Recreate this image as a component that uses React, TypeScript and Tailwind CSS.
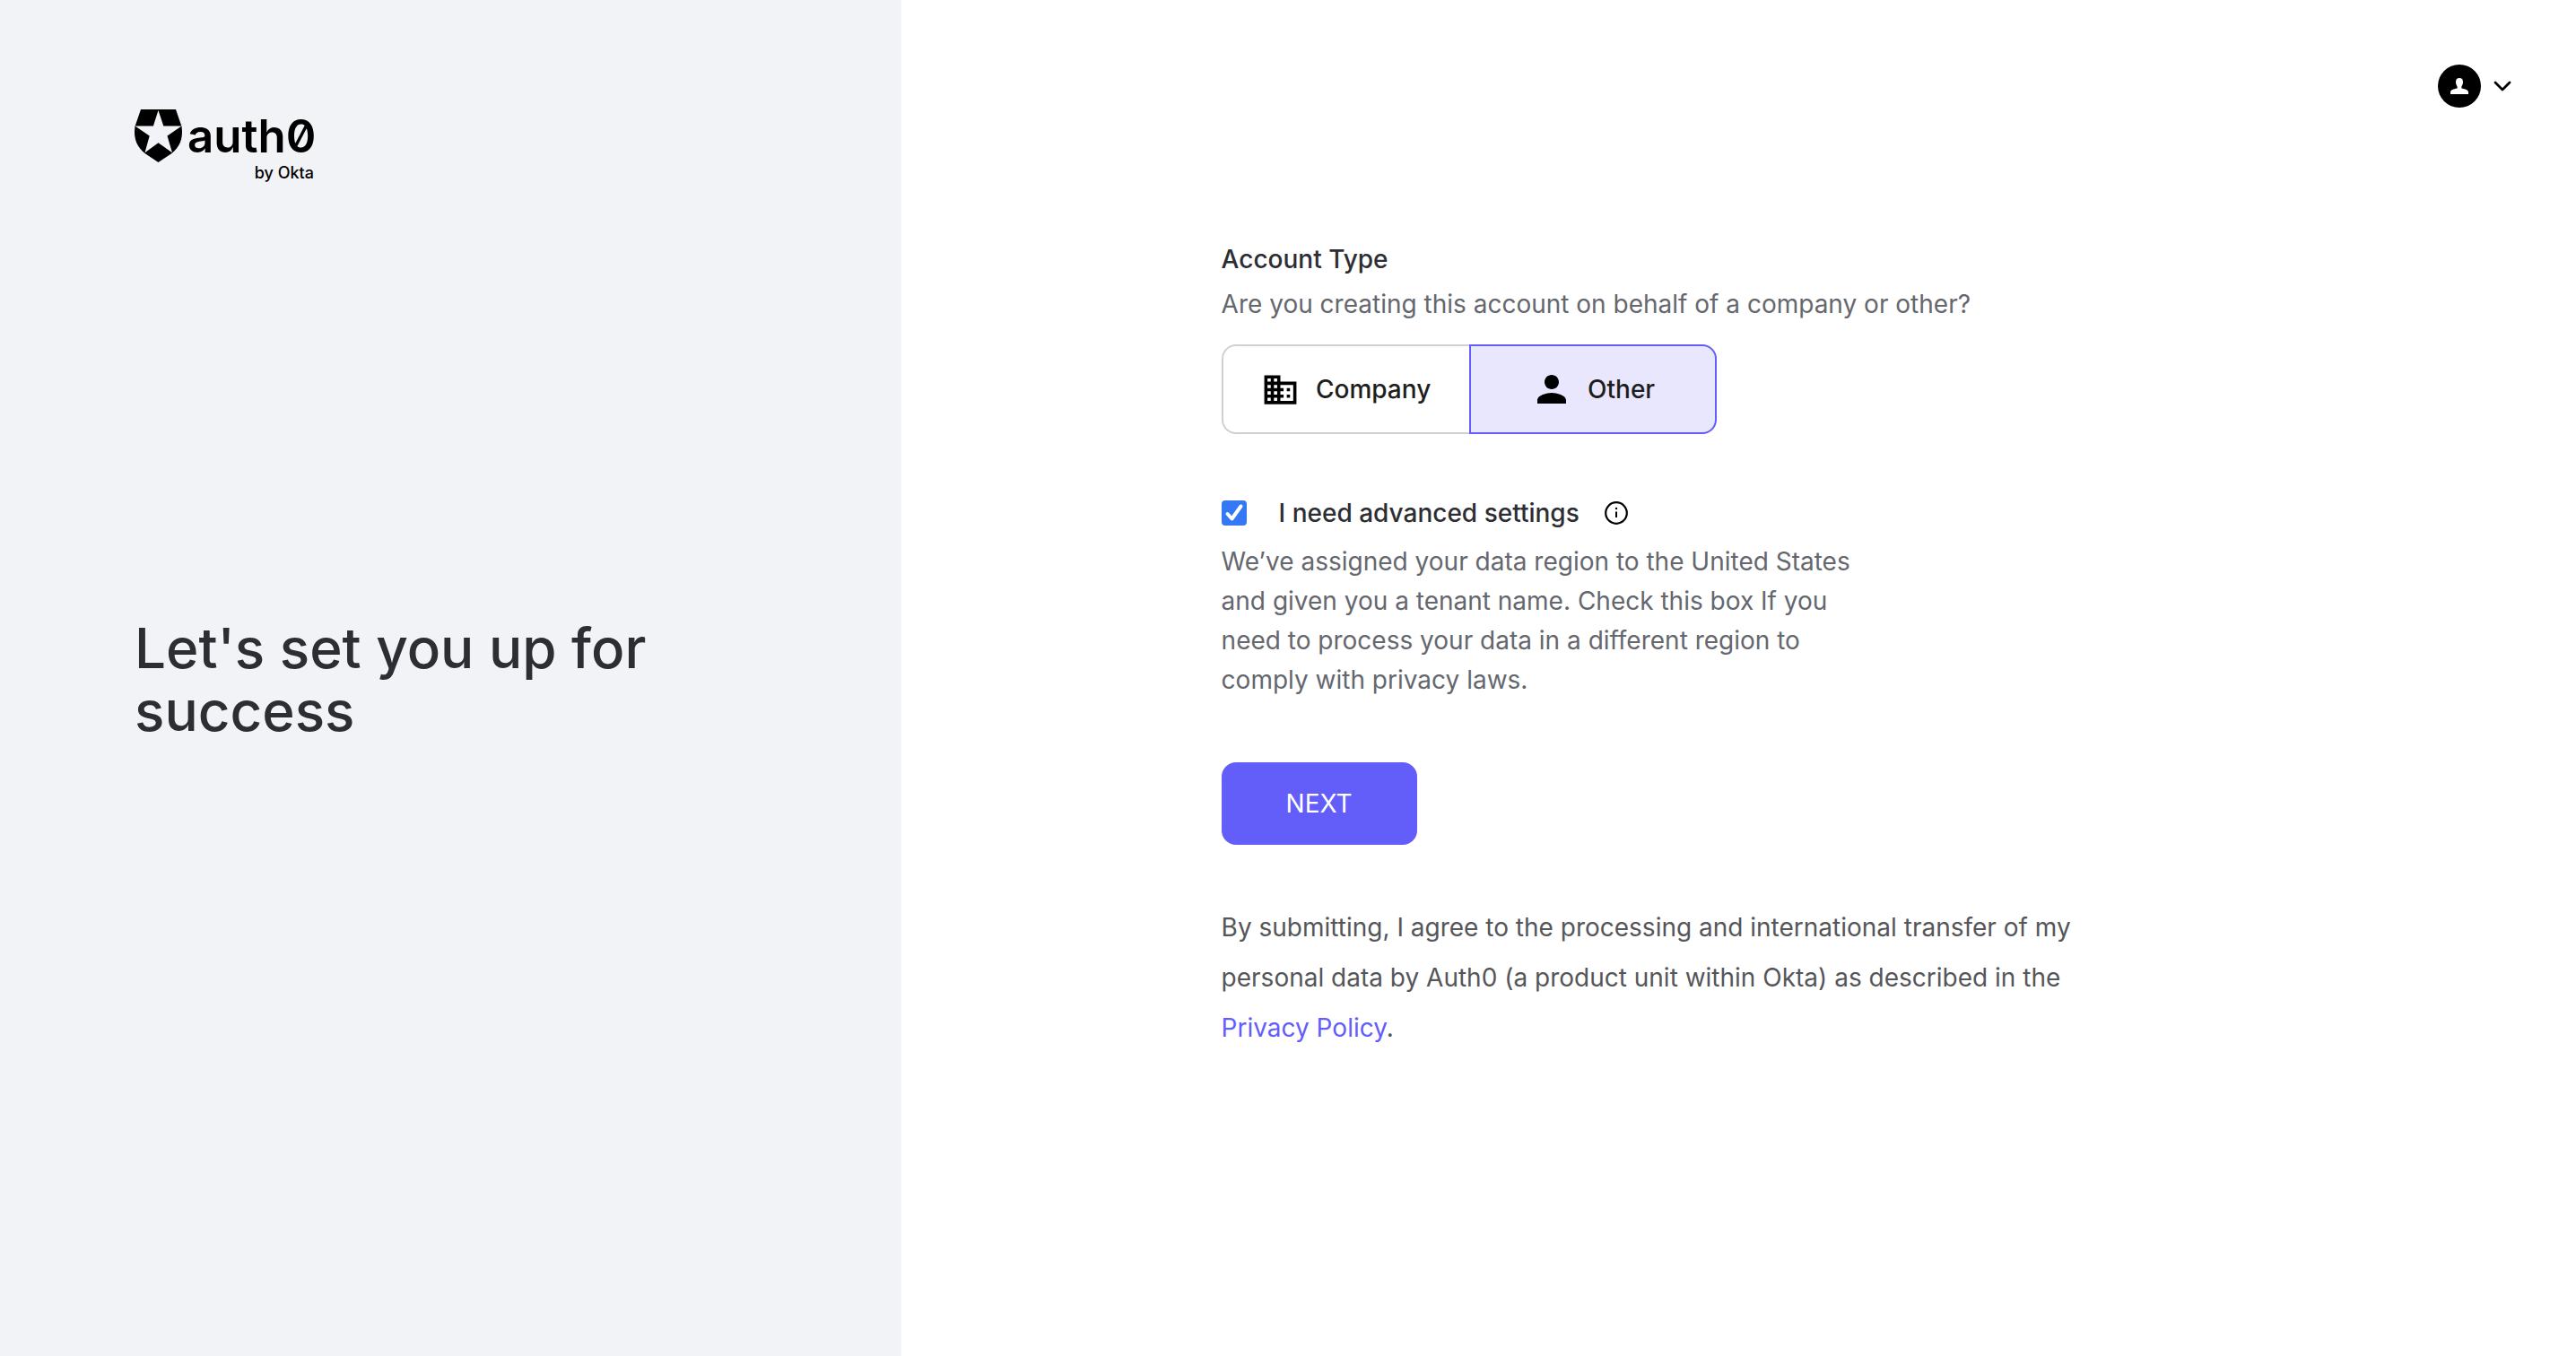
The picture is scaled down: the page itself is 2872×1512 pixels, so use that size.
import { useState } from "react";
import type React from "react";
import { ChevronDown } from "lucide-react";
import { MdBusiness, MdPerson } from "react-icons/md";

type AccountType = "company" | "other";

function Logo() {
  return (
    <svg
      viewBox="0 0 220 96"
      className="h-24 w-[220px] overflow-visible font-['Inter',sans-serif]"
      role="img"
      aria-label="auth0 by Okta"
    >
      <path d="M7 0H46L52.5 19C54.6 33 50 42 41.5 49L26.5 59L11.5 49C3 42 -1.6 33 0.5 19Z" fill="#000" />
      <path
        d="M26.5 1L32.3 18.5H52.5L36.5 29.6L42 48.3L26.5 37.3L11.5 48.3L16.7 29.6L0.5 18.5H20.9Z"
        fill="#f1f3f7"
      />
      <text
        x="59"
        y="48"
        fontSize="51"
        fontWeight="600"
        className="[font-feature-settings:'zero']"
      >
        auth0
      </text>
      <text x="200" y="77" fontSize="18" fontWeight="500" textAnchor="end">
        by Okta
      </text>
    </svg>
  );
}

interface TypeButtonProps {
  icon: React.ReactNode;
  label: string;
  selected: boolean;
  className: string;
  onClick: () => void;
}

function TypeButton({ icon, label, selected, className, onClick }: TypeButtonProps) {
  return (
    <button
      type="button"
      aria-pressed={selected}
      onClick={onClick}
      className={`flex h-[100px] w-[276px] items-center justify-center border-2 font-medium text-[#1e1e20] ${
        selected ? "border-[#635df9] bg-[#e9e7fd]" : "border-[#d0d0d2] bg-white"
      } ${className}`}
    >
      {icon}
      {label}
    </button>
  );
}

function UserMenu() {
  return (
    <button type="button" aria-label="Account menu" className="flex items-center gap-2">
      <span className="flex size-12 items-center justify-center rounded-full bg-black">
        <svg viewBox="0 0 20 18" className="h-[18px] w-5" fill="#fff">
          <path d="M10 0C12.6 0 14 1.6 14 4.2C14 6.8 13 8.4 12.4 9.4V11.4C16.5 12.2 20 13 20 16V18H0V16C0 13 3.5 12.2 7.6 11.4V9.4C7 8.4 6 6.8 6 4.2C6 1.6 7.4 0 10 0Z" />
        </svg>
      </span>
      <ChevronDown size={32} strokeWidth={2} color="#000" />
    </button>
  );
}

export default function App() {
  const [accountType, setAccountType] = useState<AccountType>("other");
  const [advanced, setAdvanced] = useState(true);

  return (
    <div className="flex min-h-screen bg-white font-['Inter',sans-serif] text-[28px]">
      {/* Left panel */}
      <aside className="grid w-[35%] grid-rows-[1fr_auto_1fr] bg-[#f1f3f7] px-[150px]">
        <div className="pt-[122px]">
          <Logo />
        </div>
        <h1 className="max-w-[640px] pt-1 text-[62px] leading-[70px] font-medium text-[#2d2e33]">
          Let's set you up for success
        </h1>
      </aside>

      {/* Form */}
      <main className="flex flex-1 flex-col">
        <header className="flex justify-end pt-[72px] pr-[66px]">
          <UserMenu />
        </header>

        <form
          className="mx-auto mt-[148px] w-full max-w-[1154px]"
          onSubmit={(e) => e.preventDefault()}
        >
          <h2 className="leading-[42px] font-medium text-[#2d2e33]">Account Type</h2>
          <p className="mt-2 leading-[42px] text-[#65676e]">
            Are you creating this account on behalf of a company or other?
          </p>

          <div className="mt-6 flex">
            <TypeButton
              icon={<MdBusiness size={43} color="#000" />}
              label="Company"
              selected={accountType === "company"}
              className="gap-[18px] rounded-l-2xl border-r-0"
              onClick={() => setAccountType("company")}
            />
            <TypeButton
              icon={<MdPerson size={48} color="#000" />}
              label="Other"
              selected={accountType === "other"}
              className="gap-4 rounded-r-2xl"
              onClick={() => setAccountType("other")}
            />
          </div>

          <div className="mt-16 flex h-12 items-center">
            <span className="relative size-7">
              <input
                id="advanced"
                type="checkbox"
                checked={advanced}
                onChange={(e) => setAdvanced(e.target.checked)}
                className="peer block size-7 appearance-none rounded border-2 border-gray-400 checked:border-[#3478f6] checked:bg-[#3478f6]"
              />
              <svg
                viewBox="0 0 28 28"
                className="pointer-events-none absolute inset-0 hidden size-7 peer-checked:block"
                fill="none"
                stroke="#fff"
                strokeWidth="4"
                strokeLinecap="round"
                strokeLinejoin="round"
              >
                <path d="M6.5 15L11.5 20.5L21.5 6.5" />
              </svg>
            </span>
            <label htmlFor="advanced" className="ml-9 font-medium text-[#2d2e33]">
              I need advanced settings
            </label>
            <svg viewBox="0 0 26 26" className="ml-7 size-[26px]" fill="none" stroke="#000">
              <circle cx="13" cy="13" r="11.8" strokeWidth="2.2" />
              <path d="M13 11.5V18" strokeWidth="2" />
              <circle cx="13" cy="8" r="1.2" fill="#000" stroke="none" />
            </svg>
          </div>
          <p className="mt-2 max-w-[740px] leading-[44px] text-[#65676e]">
            We’ve assigned your data region to the United States and given you a tenant name. Check
            this box If you need to process your data in a different region to comply with privacy
            laws.
          </p>

          <button
            type="submit"
            className="mt-[70px] flex h-[92px] w-[218px] items-center justify-center rounded-2xl bg-[#635df9] text-white"
          >
            NEXT
          </button>

          <p className="mt-16 max-w-[1000px] leading-[56px] text-[#55565a]">
            By submitting, I agree to the processing and international transfer of my personal data
            by Auth0 (a product unit within Okta) as described in the{" "}
            <a href="#privacy" className="text-[#635df9]">
              Privacy Policy
            </a>
            .
          </p>
        </form>
      </main>
    </div>
  );
}
